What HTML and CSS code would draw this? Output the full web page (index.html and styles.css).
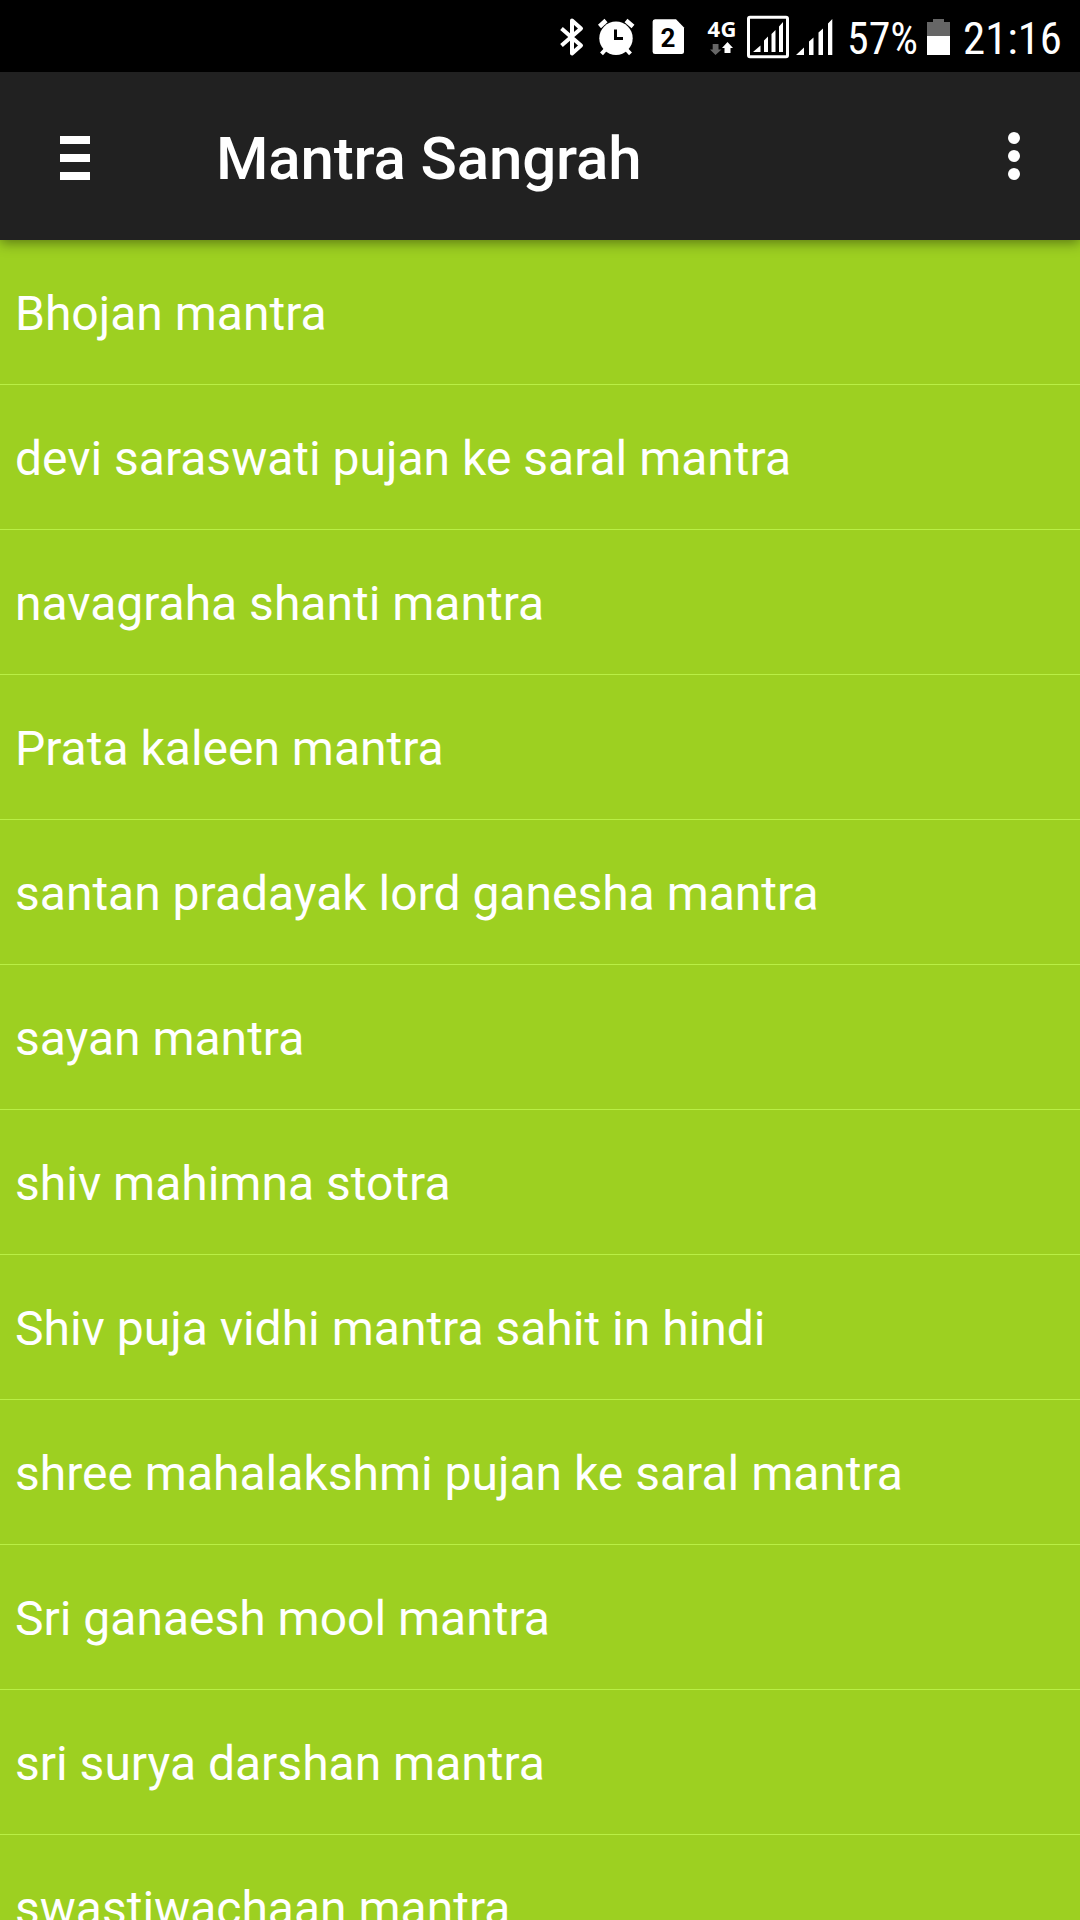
FILE: index.html
```html
<!DOCTYPE html>
<html lang="en">
<head>
<meta charset="utf-8">
<title>Mantra Sangrah</title>
<link rel="stylesheet" href="styles.css">
</head>
<body>
<div class="screen">
  <header class="status-bar">
    <svg class="icon" width="32" height="72" viewBox="556 0 32 72" aria-label="Bluetooth">
      <path d="M561.5 28.500L581 45.500L572 53.500V20.500L581 28.500L561.500 45.500" fill="none" stroke="#fff" stroke-width="4" stroke-linejoin="round"/>
    </svg>
    <svg class="icon" width="56" height="72" viewBox="588 0 56 72" aria-label="Alarm">
      <circle cx="616" cy="38.200" r="16.700" fill="#fff"/>
      <path d="M599.500 26.500L606 20.500M626 20.500L633 26.500" stroke="#fff" stroke-width="4.500" fill="none"/>
      <path d="M606 49L601.500 53.800M626 49L630.500 53.800" stroke="#fff" stroke-width="4" fill="none"/>
      <path d="M615.500 29.500V38.500H623" stroke="#000" stroke-width="3" fill="none"/>
    </svg>
    <svg class="icon" width="56" height="72" viewBox="644 0 56 72" aria-label="SIM 2">
      <path d="M655 19.300H676L684 27.500V51.500Q684 54 681.500 54H655Q652.600 54 652.600 51.500V21.800Q652.600 19.300 655 19.300Z" fill="#fff"/>
      <text class="sim-number" x="668" y="46.500" text-anchor="middle">2</text>
    </svg>
    <svg class="icon" width="44" height="72" viewBox="700 0 44 72" aria-label="4G data">
      <text class="network" x="707.500" y="36.500" textLength="29">4G</text>
      <path d="M712.700 44H718.500V49.500H721.500L715.500 55L710 49.500H712.700Z" fill="#666"/>
      <path d="M724.500 53V48H722L727.500 42L733 48H730.500V53Z" fill="#fff"/>
    </svg>
    <svg class="icon" width="49" height="72" viewBox="744 0 49 72" aria-label="Signal SIM 1">
      <rect x="748.500" y="17.300" width="39" height="39.400" rx="1.500" fill="none" stroke="#fff" stroke-width="3"/>
      <path d="M753 52L760.500 45.500V52ZM764 52V40.500L768 36.500V52ZM771.500 52V34L775.500 30V52ZM779 52V26.500L783 22V52Z" fill="#fff"/>
    </svg>
    <svg class="icon" width="47" height="72" viewBox="793 0 47 72" aria-label="Signal SIM 2">
      <path d="M796 55L804 47.500V55ZM809 55V41.500L813.500 37.500V55ZM818.500 55V32.500L823 28.500V55ZM828 55V23.500L832.300 19V55Z" fill="#fff"/>
    </svg>
    <svg class="icon" width="82" height="72" viewBox="840 0 82 72">
      <text class="status-text" x="847" y="54" textLength="71" lengthAdjust="spacingAndGlyphs">57%</text>
    </svg>
    <svg class="icon" width="36" height="72" viewBox="922 0 36 72" aria-label="Battery">
      <path d="M927 36V22H933V19H944V22H950V36Z" fill="#666"/>
      <path d="M927 36H950V55H927Z" fill="#fff"/>
    </svg>
    <svg class="icon" width="122" height="72" viewBox="958 0 122 72">
      <text class="status-text" x="963" y="54" textLength="99" lengthAdjust="spacingAndGlyphs">21:16</text>
    </svg>
  </header>
  <nav class="app-bar">
    <svg class="menu" width="30" height="44" viewBox="0 0 30 44" aria-label="Menu">
      <path d="M0 0H30V8H0ZM0 18H30V26H0ZM0 36H30V44H0Z" fill="#fff"/>
    </svg>
    <h1 class="title">Mantra Sangrah</h1>
    <svg class="more" width="12" height="48" viewBox="0 0 12 48" aria-label="More options">
      <circle cx="6" cy="6" r="6" fill="#fff"/><circle cx="6" cy="24" r="6" fill="#fff"/><circle cx="6" cy="42" r="6" fill="#fff"/>
    </svg>
  </nav>
  <ul class="list">
    <li class="row">Bhojan mantra</li>
    <li class="row">devi saraswati pujan ke saral mantra</li>
    <li class="row">navagraha shanti mantra</li>
    <li class="row">Prata kaleen mantra</li>
    <li class="row">santan pradayak lord ganesha mantra</li>
    <li class="row">sayan mantra</li>
    <li class="row">shiv mahimna stotra</li>
    <li class="row">Shiv puja vidhi mantra sahit in hindi</li>
    <li class="row">shree mahalakshmi pujan ke saral mantra</li>
    <li class="row">Sri ganaesh mool mantra</li>
    <li class="row">sri surya darshan mantra</li>
    <li class="row">swastiwachaan mantra</li>
  </ul>
</div>
</body>
</html>
```
FILE: styles.css
```css
* { box-sizing: border-box; }
body {
  margin: 0;
  font-family: Roboto, "Liberation Sans", sans-serif;
  color: #fff;
}
.screen {
  display: flex;
  flex-direction: column;
  width: 1080px;
  height: 1920px;
  overflow: hidden;
  background: #9dd021;
}
.status-bar {
  display: flex;
  flex: none;
  justify-content: flex-end;
  height: 72px;
  background: #000;
}
.icon { display: block; flex: none; }
.status-text { font-family: "Roboto Condensed", Roboto, sans-serif; font-size: 45px; fill: #fff; }
.sim-number { font-family: Roboto, sans-serif; font-size: 26px; font-weight: 700; fill: #000; }
.network { font-family: "Open Sans", sans-serif; font-size: 22px; font-weight: 700; fill: #fff; }
.app-bar {
  display: flex;
  flex: none;
  align-items: center;
  height: 168px;
  padding: 0 60px;
  background: #212121;
  box-shadow: 0 3px 12px rgba(0, 0, 0, 0.42);
  z-index: 1;
}
.menu { margin-top: 4px; }
.title {
  flex: 1;
  margin: 6px 0 0 126px;
  font-size: 60px;
  font-weight: 500;
  line-height: 70px;
  letter-spacing: -0.15px;
}
.more { display: block; }
.list {
  margin: 0;
  padding: 0;
  list-style: none;
}
.row {
  height: 145px;
  padding: 3px 0 0 15px;
  border-bottom: 1px solid #b9ef45;
  font-size: 48px;
  line-height: 141px;
  white-space: nowrap;
}
```
